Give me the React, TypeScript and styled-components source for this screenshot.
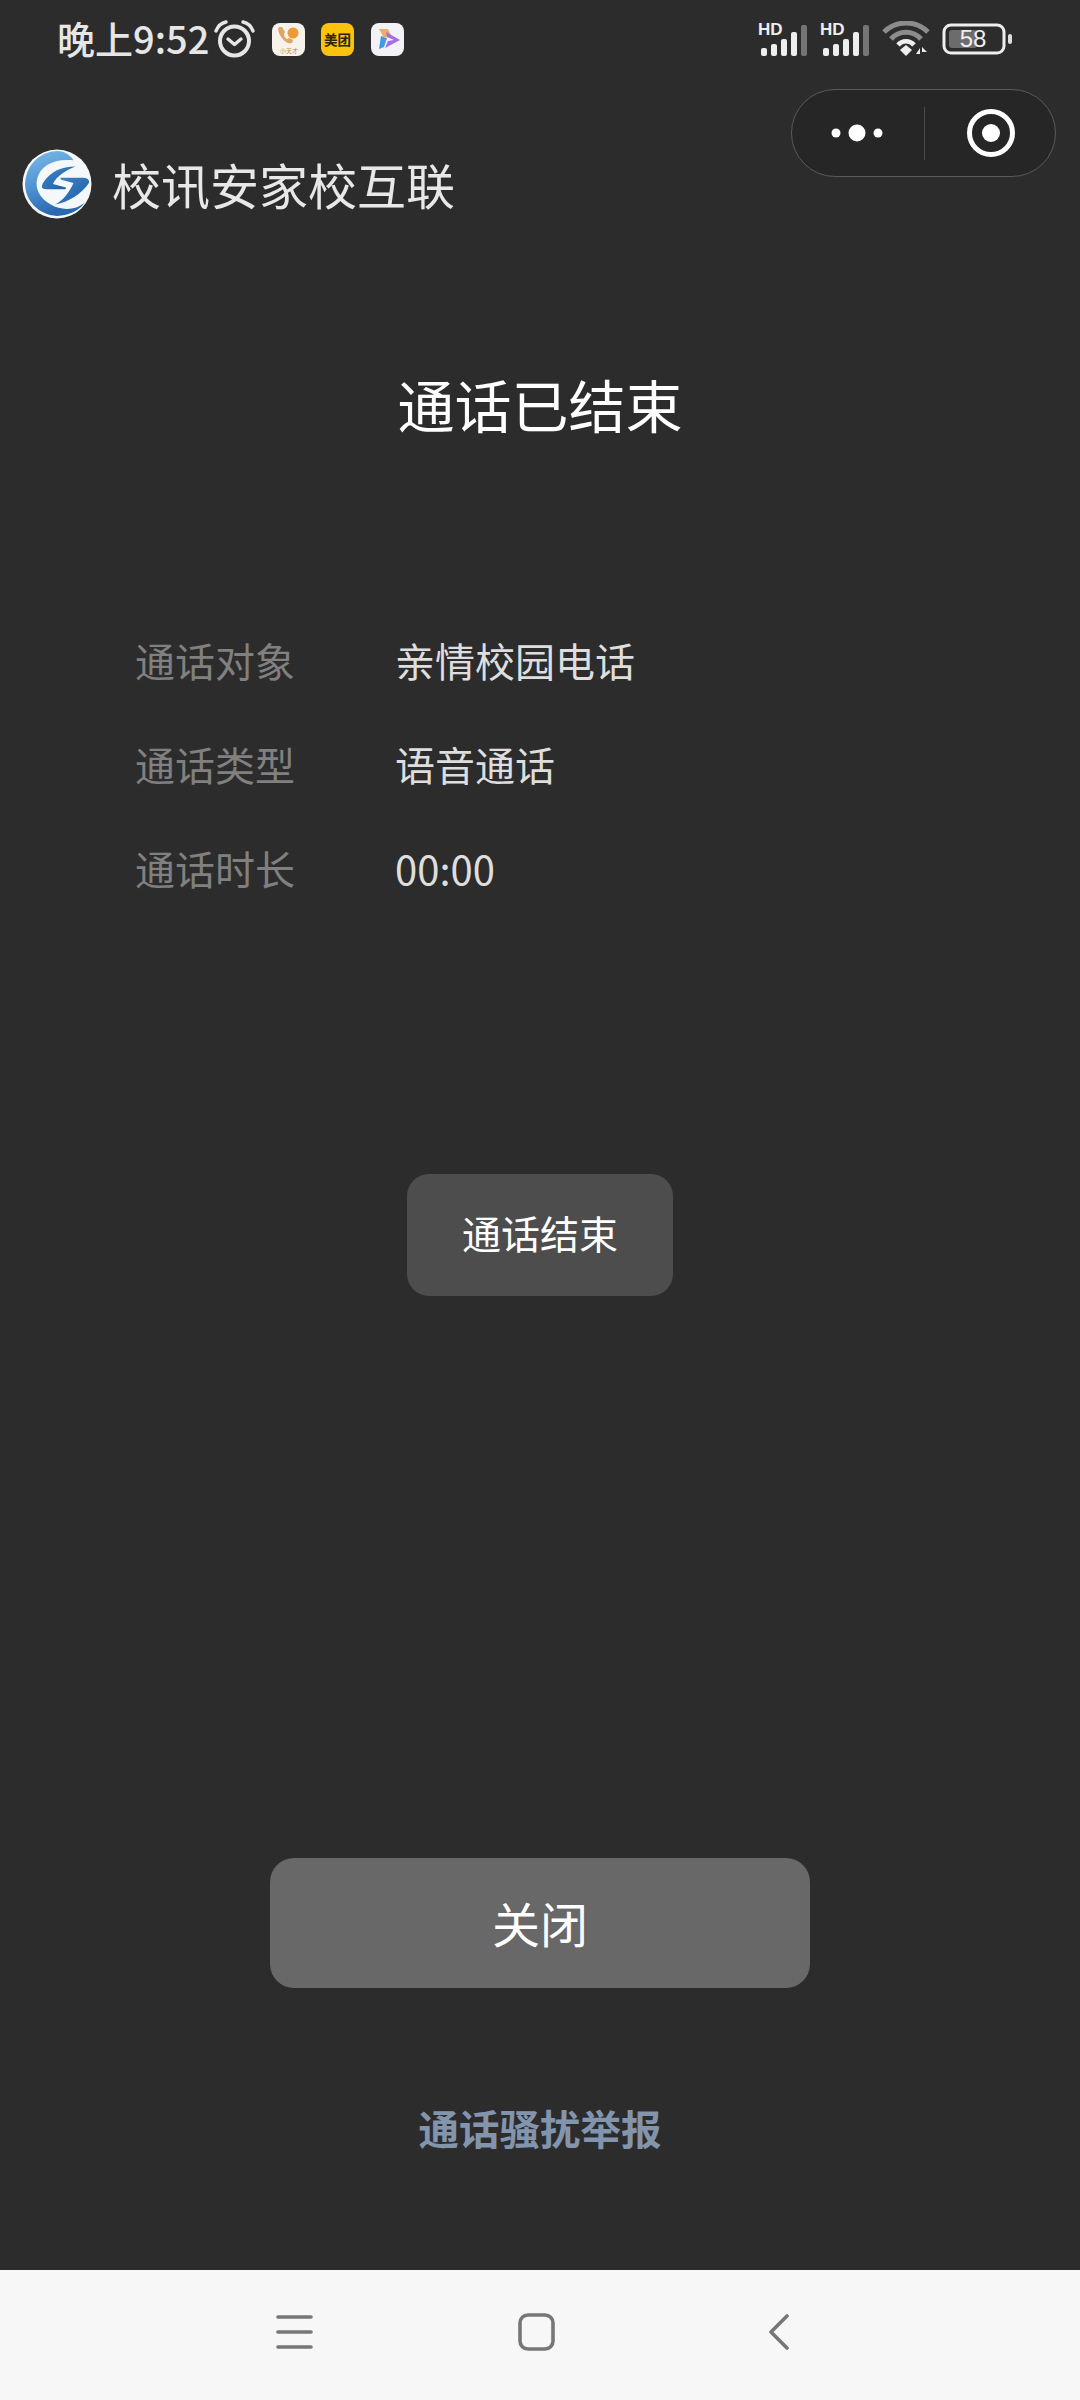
import styled, { createGlobalStyle } from 'styled-components';

const GlobalStyle = createGlobalStyle`
	html, body {
		margin: 0;
		padding: 0;
		background: #2c2c2c;
	}
`;

const CJK = `"Noto Sans CJK SC", "Noto Sans", sans-serif`;

const Page = styled.div`
	position: relative;
	width: 1080px;
	height: 2400px;
	display: flex;
	flex-direction: column;
	background: #2c2c2c;
	font-family: ${CJK};
	overflow: hidden;
`;

const StatusBar = styled.div`
	height: 78px;
	padding: 0 68px 0 57px;
	box-sizing: border-box;
	display: flex;
	align-items: center;
	justify-content: space-between;
`;

const StatusLeft = styled.div`
	display: flex;
	align-items: center;
`;

const StatusRight = styled.div`
	display: flex;
	align-items: center;
	gap: 12px;
`;

const Time = styled.span`
	font-size: 38px;
	line-height: 44px;
	font-weight: 500;
	color: #e6e6e6;
	margin: 0 5px 3px 0;
`;

const AppIcon = styled.div`
	width: 33px;
	height: 33px;
	border-radius: 8px;
	margin-left: 16.5px;
	overflow: hidden;
	flex: none;
`;

const SignalWrap = styled.div`
	position: relative;
	width: 50px;
	height: 34px;
`;

const HdLabel = styled.span`
	position: absolute;
	left: 0;
	top: 0;
	font-family: "Liberation Sans", sans-serif;
	font-size: 17px;
	font-weight: 700;
	line-height: 15px;
	color: #eee;
`;

const Capsule = styled.div`
	position: absolute;
	left: 791px;
	top: 89px;
	width: 265px;
	height: 88px;
	box-sizing: border-box;
	border: 1px solid #5a5a5a;
	border-radius: 44px;
	background: #262626;
	display: grid;
	grid-template-columns: 132px 1px 1fr;
	align-items: center;
`;

const CapsuleSlot = styled.div<{ $nudge?: number }>`
	display: flex;
	align-items: center;
	justify-content: center;
	padding-left: ${(p) => p.$nudge ?? 0}px;
`;

const CapsuleDivider = styled.div`
	height: 53px;
	background: #4a4a4a;
`;

const TitleBar = styled.div`
	display: flex;
	align-items: center;
	gap: 20px;
	height: 70px;
	padding-left: 22px;
	margin-top: 71px;
`;

const AppTitle = styled.div`
	font-size: 49px;
	line-height: 68px;
	color: #e8e8e8;
`;

const Heading = styled.h1`
	margin: 144px 0 0;
	text-align: center;
	font-size: 57px;
	line-height: 80px;
	font-weight: 400;
	color: #fff;
`;

const InfoList = styled.div`
	margin-top: 187px;
	padding-left: 135px;
	display: flex;
	flex-direction: column;
	gap: 44px;
`;

const InfoRow = styled.div`
	display: flex;
	height: 60px;
	align-items: center;
	font-size: 40px;
`;

const InfoLabel = styled.span`
	width: 260px;
	color: #808080;
`;

const InfoValue = styled.span`
	color: #dedede;
`;

const EndedButton = styled.div`
	align-self: center;
	box-sizing: border-box;
	width: 266px;
	height: 122px;
	margin-top: 276px;
	padding-bottom: 7px;
	border-radius: 22px;
	background: #4d4d4d;
	color: #fff;
	font-size: 39px;
	display: flex;
	align-items: center;
	justify-content: center;
`;

const CloseButton = styled.div`
	align-self: center;
	box-sizing: border-box;
	width: 540px;
	height: 130px;
	margin-top: 562px;
	padding-bottom: 2px;
	border-radius: 24px;
	background: #686868;
	color: #fff;
	font-size: 48px;
	display: flex;
	align-items: center;
	justify-content: center;
`;

const ReportLink = styled.div`
	margin-top: 110px;
	text-align: center;
	font-size: 40.5px;
	line-height: 60px;
	font-weight: 700;
	color: #8394ad;
`;

const NavBar = styled.div`
	position: absolute;
	left: 0;
	right: 0;
	bottom: 0;
	height: 130px;
	background: #f7f7f7;
`;

const NavInner = styled.div`
	height: 100%;
	box-sizing: border-box;
	padding: 0 0 6px 276px;
	display: grid;
	grid-template-columns: 242px 251px auto;
	align-items: center;
`;

const AlarmIcon = () => (
	<svg width="41" height="38" viewBox="0 0 41 38" fill="none" stroke="#e6e6e6" strokeLinecap="round">
		<circle cx="20.5" cy="21" r="14.5" strokeWidth="4" />
		<path d="M14 19l6.5 5.5 6.5-5.5" strokeWidth="3.4" strokeLinejoin="round" />
		<path d="M2 11C4 6 7 3 12 2" strokeWidth="3.4" />
		<path d="M39 11C37 6 34 3 29 2" strokeWidth="3.4" />
	</svg>
);

const PhoneAppIcon = () => (
	<svg width="33" height="33" viewBox="0 0 33 33">
		<rect width="33" height="33" fill="#f7f3ec" />
		<circle cx="21" cy="10" r="5.5" fill="#ed9a3a" />
		<path d="M7 4c-2 2 0 7 3 11s6 6 10 5l1-3-4-2-2 1c-2-1-3-3-3-5l1-2-3-5z" fill="#e0a562" />
		<text x="17" y="30" textAnchor="middle" fontFamily={CJK} fontSize="6" fill="#b9874e">
			小天才
		</text>
	</svg>
);

const MeituanIcon = () => (
	<svg width="33" height="33" viewBox="0 0 33 33">
		<rect width="33" height="33" fill="#fcc30d" />
		<text x="16.5" y="21.5" textAnchor="middle" fontFamily={CJK} fontWeight="700" fontSize="13.5" fill="#2a2410">
			美团
		</text>
	</svg>
);

const PlayAppIcon = () => (
	<svg width="33" height="33" viewBox="0 0 33 33">
		<rect width="33" height="33" fill="#f2f2f7" />
		<path d="M10 13l-2 13 5-2 3-9z" fill="#3f9ae8" />
		<path d="M8 6l9 0 3 6-7 3z" fill="#eeae6a" />
		<path d="M15 9l14 8-15 8 3-7 6-1-7-3z" fill="#a46de0" />
	</svg>
);

const SignalIcon = () => (
	<SignalWrap>
		<HdLabel>HD</HdLabel>
		<svg width="50" height="34" viewBox="0 0 50 34" style={{ display: 'block' }}>
			<rect x="3" y="26" width="6" height="8" rx="2" fill="#eee" />
			<rect x="13" y="22" width="6" height="12" rx="2" fill="#eee" />
			<rect x="23" y="17" width="6" height="17" rx="2" fill="#eee" />
			<rect x="33" y="10" width="6" height="24" rx="2" fill="#eee" />
			<rect x="43" y="3" width="6" height="31" rx="2" fill="#757575" />
		</svg>
	</SignalWrap>
);

const WifiIcon = () => (
	<svg width="48" height="36" viewBox="0 0 48 36" fill="none" strokeLinecap="butt">
		<path d="M2 11C14 -1 34 -1 46 11" stroke="#8c8c8c" strokeWidth="5" />
		<path d="M9 18C17 9 31 9 39 18" stroke="#8c8c8c" strokeWidth="5" />
		<path d="M16 24C20 19 28 19 32 24" stroke="#eee" strokeWidth="4.5" />
		<path d="M18 29l6-5 6 5-6 6z" fill="#eee" />
		<path d="M34 33l4-6v6zM40 26l5 5h-5z" fill="#eee" />
	</svg>
);

const BatteryIcon = () => (
	<svg width="70" height="32" viewBox="0 0 70 32">
		<rect x="2" y="2" width="60" height="28" rx="7" fill="none" stroke="#eee" strokeWidth="3" />
		<rect x="7" y="7" width="28" height="18" rx="3" fill="#6c6c6c" />
		<text x="31" y="24" textAnchor="middle" fontFamily="Liberation Sans, sans-serif" fontSize="24" fill="#eee">
			58
		</text>
		<rect x="66" y="11" width="4" height="10" rx="2" fill="#ddd" />
	</svg>
);

const MoreIcon = () => (
	<svg width="54" height="18" viewBox="0 0 54 18" fill="#fff">
		<circle cx="5" cy="9" r="4.5" />
		<circle cx="26" cy="9" r="8.5" />
		<circle cx="47" cy="9" r="4.5" />
	</svg>
);

const TargetIcon = () => (
	<svg width="48" height="48" viewBox="0 0 48 48">
		<circle cx="24" cy="24" r="21.5" fill="none" stroke="#fff" strokeWidth="5" />
		<circle cx="24" cy="24" r="9" fill="#fff" />
	</svg>
);

const SchoolLogo = () => (
	<svg width="70" height="70" viewBox="0 0 68 68">
		<defs>
			<linearGradient id="ringFill" x1="0" y1="0" x2="0.3" y2="1">
				<stop offset="0" stopColor="#7cbce8" />
				<stop offset="0.55" stopColor="#4f93d2" />
				<stop offset="1" stopColor="#2a68b0" />
			</linearGradient>
			<linearGradient id="sFill" x1="0" y1="0" x2="1" y2="1">
				<stop offset="0" stopColor="#3f86c8" />
				<stop offset="1" stopColor="#1f5ca6" />
			</linearGradient>
		</defs>
		<circle cx="34" cy="34" r="33.5" fill="#f4f8fb" />
		<path d="M34 2A32 32 0 0 0 3 34C3 50 16 64 34 65C46 65 56 59 61 52C52 60 38 60 28 54C17 48 12 38 15 28C18 17 30 9 50 11C46 5 40 2 34 2Z" fill="url(#ringFill)" />
		<path d="M52 17C38 17 28 22 21 32C18 37 19 39 24 39L42 39C43 39 43 37 41 37L30 34C34 26 42 21 52 17Z" fill="url(#sFill)" />
		<path d="M32 54C44 52 58 44 65 33C66 29 62 28 58 28L38 28C37 28 37 30 39 30L50 33C46 42 40 50 32 54Z" fill="url(#sFill)" />
	</svg>
);

const MenuGlyph = () => (
	<svg width="37" height="34" viewBox="0 0 37 34" stroke="#777" strokeWidth="3.6" strokeLinecap="round" style={{ display: 'block' }}>
		<path d="M2 2h33M2 17h33M2 32h33" />
	</svg>
);

const HomeGlyph = () => (
	<svg width="37" height="38" viewBox="0 0 37 38" fill="none" stroke="#777" strokeWidth="3.6" style={{ display: 'block' }}>
		<rect x="2" y="2" width="33" height="34" rx="8" />
	</svg>
);

const BackGlyph = () => (
	<svg width="20" height="36" viewBox="0 0 20 36" fill="none" stroke="#777" strokeWidth="3.6" strokeLinecap="round" strokeLinejoin="round" style={{ display: 'block' }}>
		<path d="M18 2L2 18l16 16" />
	</svg>
);

const App = () => {
	return (
		<>
			<GlobalStyle />
			<Page>
				<StatusBar>
					<StatusLeft>
						<Time>晚上9:52</Time>
						<AlarmIcon />
						<AppIcon>
							<PhoneAppIcon />
						</AppIcon>
						<AppIcon>
							<MeituanIcon />
						</AppIcon>
						<AppIcon>
							<PlayAppIcon />
						</AppIcon>
					</StatusLeft>
					<StatusRight>
						<SignalIcon />
						<SignalIcon />
						<WifiIcon />
						<BatteryIcon />
					</StatusRight>
				</StatusBar>
				<Capsule>
					<CapsuleSlot>
						<MoreIcon />
					</CapsuleSlot>
					<CapsuleDivider />
					<CapsuleSlot $nudge={2}>
						<TargetIcon />
					</CapsuleSlot>
				</Capsule>
				<TitleBar>
					<SchoolLogo />
					<AppTitle>校讯安家校互联</AppTitle>
				</TitleBar>
				<Heading>通话已结束</Heading>
				<InfoList>
					<InfoRow>
						<InfoLabel>通话对象</InfoLabel>
						<InfoValue>亲情校园电话</InfoValue>
					</InfoRow>
					<InfoRow>
						<InfoLabel>通话类型</InfoLabel>
						<InfoValue>语音通话</InfoValue>
					</InfoRow>
					<InfoRow>
						<InfoLabel>通话时长</InfoLabel>
						<InfoValue>00:00</InfoValue>
					</InfoRow>
				</InfoList>
				<EndedButton>通话结束</EndedButton>
				<CloseButton>关闭</CloseButton>
				<ReportLink>通话骚扰举报</ReportLink>
				<NavBar>
					<NavInner>
						<MenuGlyph />
						<HomeGlyph />
						<BackGlyph />
					</NavInner>
				</NavBar>
			</Page>
		</>
	);
};

export default App;
